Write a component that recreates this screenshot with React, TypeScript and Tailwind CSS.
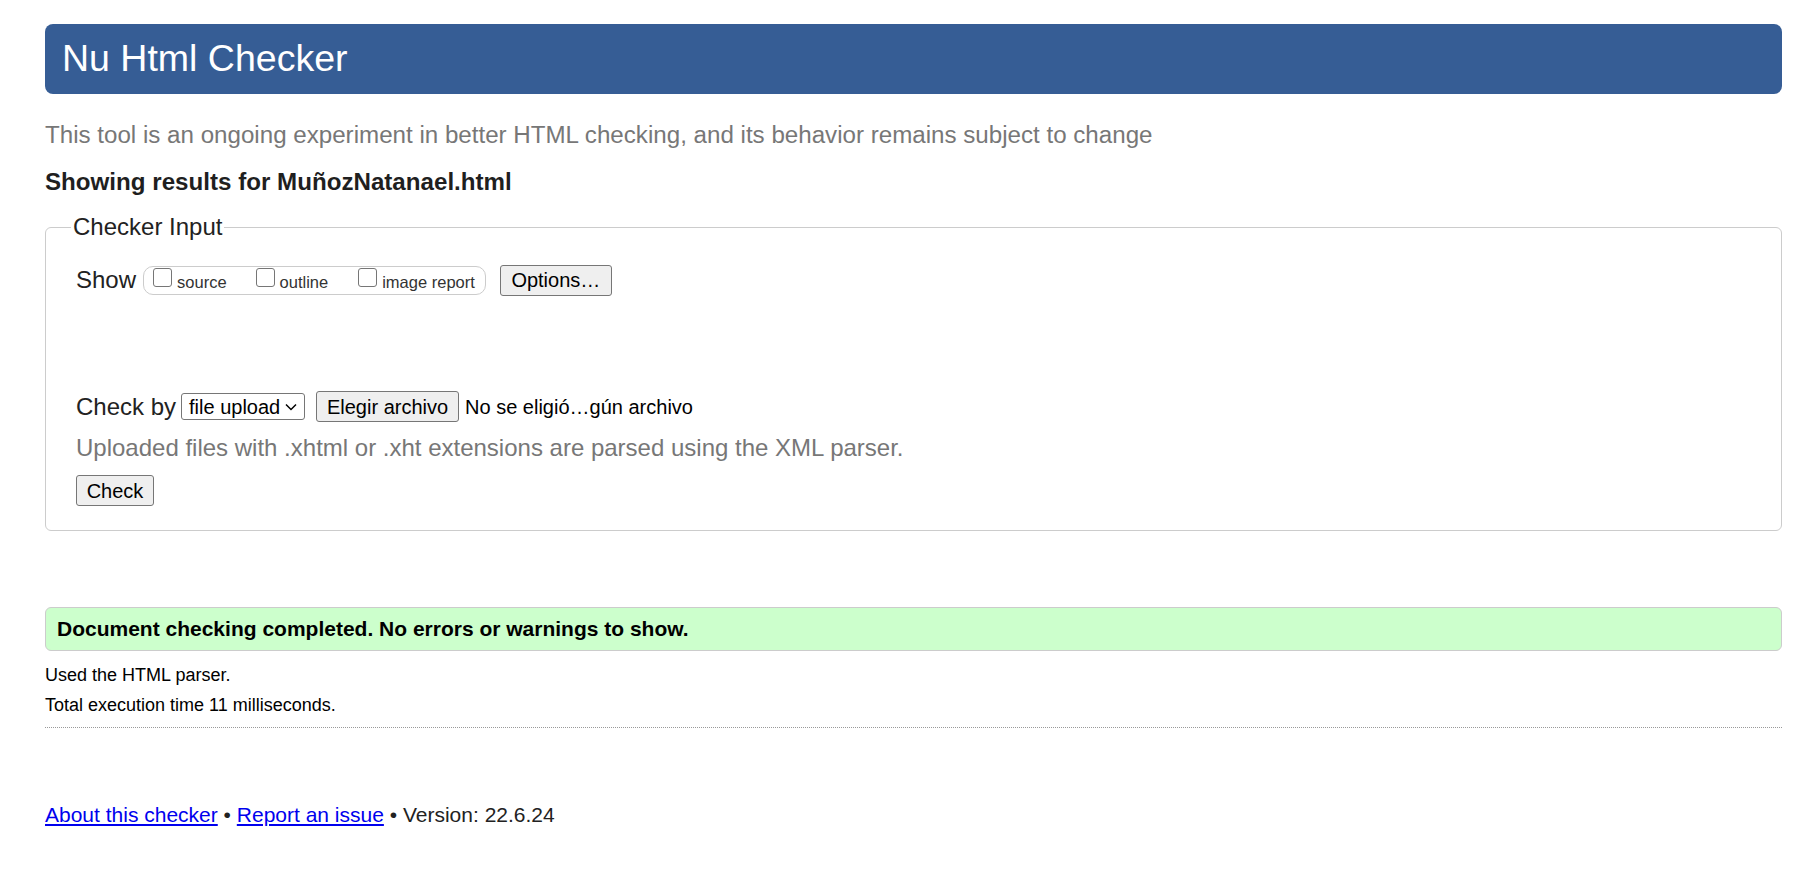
// Nu Html Checker – results page
const FONT = "font-['Liberation_Sans',Arial,Helvetica,sans-serif]";

function Box({ label }: { label: string }) {
  return (
    <label className="flex items-center">
      <span className="mb-[6px] w-[19px] h-[19px] shrink-0 rounded-[3px] border border-[#767676] bg-white" />
      <span className="ml-[5px] mt-[5px] text-[16.5px] leading-[19px] text-[#333]">{label}</span>
    </label>
  );
}

function Btn({ children, w }: { children: string; w: string }) {
  return (
    <button
      className={`${w} h-[31px] shrink-0 rounded-[3px] border border-[#767676] bg-[#efefef] text-[20px] leading-none text-black`}
    >
      {children}
    </button>
  );
}

export default function App() {
  return (
    <div className={`min-h-screen bg-white pl-[45px] pr-[22px] pt-[24px] text-[#222] ${FONT}`}>
      <h1 className="flex h-[70px] items-center rounded-[8px] bg-[#365d95] pl-[17px] text-[37.5px] font-normal leading-none text-white">
        Nu Html Checker
      </h1>

      <p className="mt-[27px] text-[24.15px] leading-[28px] text-[#777]">
        This tool is an ongoing experiment in better HTML checking, and its behavior remains subject to change
      </p>

      <p className="mt-[19px] text-[24.15px] font-bold leading-[28px] text-[#1f1f1f]">
        Showing results for MuñozNatanael.html
      </p>

      {/* ── Checker input ── */}
      <fieldset className="mt-[17px] rounded-[6px] border border-[#cccccc] px-[30px] pb-[24px] pt-[23px]">
        <legend className="-ml-[5px] px-[2px] text-[24px] leading-[28px]">Checker Input</legend>

        <div className="flex h-[32px] items-center">
          <span className="text-[24px] leading-[28px]">Show</span>
          <div className="ml-[7px] flex h-[29px] items-center rounded-[10px] border border-[#cccccc] pl-[9px] pr-[10px]">
            <Box label="source" />
            <div className="ml-[29px]">
              <Box label="outline" />
            </div>
            <div className="ml-[30px]">
              <Box label="image report" />
            </div>
          </div>
          <div className="ml-[14px]">
            <Btn w="w-[112px]">Options…</Btn>
          </div>
        </div>

        <div className="mt-[95px] flex h-[31px] items-center">
          <span className="text-[24px] leading-[28px]">Check by</span>
          <div className="ml-[5px] flex h-[27px] w-[124px] items-center justify-between rounded-[3px] border border-[#767676] bg-white pl-[7px] pr-[7px] text-[20px] leading-none text-black">
            <span>file upload</span>
            <svg width="12" height="8" viewBox="0 0 12 8" fill="none">
              <path d="M1 1.5 L6 6.5 L11 1.5" stroke="#000" strokeWidth="1.5" />
            </svg>
          </div>
          <div className="ml-[11px]">
            <Btn w="w-[143px]">Elegir archivo</Btn>
          </div>
          <span className="ml-[6px] text-[20px] leading-none text-black">No se eligió…gún archivo</span>
        </div>

        <p className="mt-[12px] text-[24px] leading-[28px] text-[#777]">
          Uploaded files with .xhtml or .xht extensions are parsed using the XML parser.
        </p>

        <div className="mt-[13px]">
          <Btn w="w-[78px]">Check</Btn>
        </div>
      </fieldset>

      {/* ── Result ── */}
      <div className="mt-[76px] flex h-[44px] items-center rounded-[6px] border border-[#cccccc] bg-[#ccffcc] pl-[11px] text-[21px] font-bold text-black">
        Document checking completed. No errors or warnings to show.
      </div>

      <p className="mt-[9px] text-[18px] leading-[30px] text-black">Used the HTML parser.</p>
      <p className="text-[18px] leading-[30px] text-black">Total execution time 11 milliseconds.</p>
      <div className="mt-[7px] border-b border-dotted border-[#999]" />

      <p className="mt-[75px] pb-[40px] text-[21px] leading-[24px] text-[#222]">
        <a href="#" className="text-[#0000ee] underline">About this checker</a>
        {' • '}
        <a href="#" className="text-[#0000ee] underline">Report an issue</a>
        {' • Version: 22.6.24'}
      </p>
    </div>
  );
}
